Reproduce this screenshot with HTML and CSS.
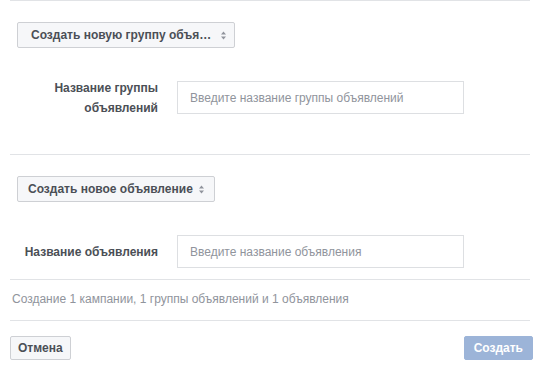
FILE: index.html
```html
<!DOCTYPE html>
<html lang="ru">
<head>
<meta charset="utf-8">
<title>Создание</title>
<link rel="stylesheet" href="styles.css">
</head>
<body>
<div class="page">
  <div class="divider"></div>
  <section class="block block--first">
    <button class="select select--wide" type="button">
      <span class="select__text">Создать новую группу объя…</span>
      <svg class="select__icon" width="5" height="9" viewBox="0 0 5 9"><path d="M2.5 0.5 L5 3.5 H0 Z M2.5 8.5 L0 5.5 H5 Z" fill="#90949c"/></svg>
    </button>
    <div class="row">
      <label class="row__label">Название группы объявлений</label>
      <input class="row__input" type="text" placeholder="Введите название группы объявлений">
    </div>
  </section>
  <div class="divider"></div>
  <section class="block block--second">
    <button class="select" type="button">
      <span class="select__text">Создать новое объявление</span>
      <svg class="select__icon" width="5" height="9" viewBox="0 0 5 9"><path d="M2.5 0.5 L5 3.5 H0 Z M2.5 8.5 L0 5.5 H5 Z" fill="#90949c"/></svg>
    </button>
    <div class="row">
      <label class="row__label">Название объявления</label>
      <input class="row__input" type="text" placeholder="Введите название объявления">
    </div>
  </section>
  <div class="divider"></div>
  <p class="summary">Создание 1 кампании, 1 группы объявлений и 1 объявления</p>
  <div class="divider"></div>
  <footer class="footer">
    <button class="btn btn--cancel" type="button">Отмена</button>
    <button class="btn btn--primary" type="button">Создать</button>
  </footer>
</div>
</body>
</html>
```

FILE: styles.css
```css
* { box-sizing: border-box; }
html, body {
  margin: 0;
  padding: 0;
  background: #fff;
}
body {
  font-family: "Liberation Sans", Arial, Helvetica, sans-serif;
  font-size: 12px;
  color: #4b4f56;
}
.page {
  width: 544px;
  padding: 0 11px 0 10px;
}
.divider {
  height: 1px;
  background: #e1e3e6;
  margin-right: 3px;
}
.block {
  padding: 21px 0 0 7px;
}
.block--first { padding-bottom: 40px; }
.block--second { padding-bottom: 11px; }

.select {
  display: inline-flex;
  align-items: center;
  gap: 6px;
  height: 26px;
  padding: 0 10px;
  background: #f6f7f9;
  border: 1px solid #ced0d4;
  border-radius: 2px;
  font-family: inherit;
  font-size: 12px;
  font-weight: bold;
  color: #4b4f56;
  cursor: pointer;
}
.select--wide {
  width: 218px;
  padding: 0 8px 0 13px;
  justify-content: space-between;
}
.select__text {
  white-space: nowrap;
}
.select__icon { flex: none; }

.row {
  display: flex;
  align-items: center;
  gap: 19px;
  height: 33px;
  margin-top: 33px;
}
.row__label {
  width: 141px;
  flex: none;
  text-align: right;
  font-weight: bold;
  line-height: 20px;
  color: #4b4f56;
}
.row__input {
  width: 287px;
  height: 33px;
  padding: 0 12px;
  border: 1px solid #dddfe2;
  border-radius: 0;
  font-family: inherit;
  font-size: 12px;
  color: #1d2129;
  outline: none;
}
.row__input::placeholder { color: #90949c; }

.summary {
  margin: 0;
  padding: 11px 0 13px 2px;
  line-height: 16px;
  color: #90949c;
}

.footer {
  display: flex;
  justify-content: space-between;
  padding-top: 15px;
}
.btn {
  height: 24px;
  padding: 0 7px;
  border-radius: 2px;
  font-family: inherit;
  font-size: 12px;
  font-weight: bold;
  cursor: pointer;
}
.btn--cancel {
  background: #f6f7f9;
  border: 1px solid #ced0d4;
  color: #4b4f56;
}
.btn--primary {
  padding: 0 9px;
  background: #9cb4d8;
  border: 1px solid #9cb4d8;
  color: #fff;
}
```
